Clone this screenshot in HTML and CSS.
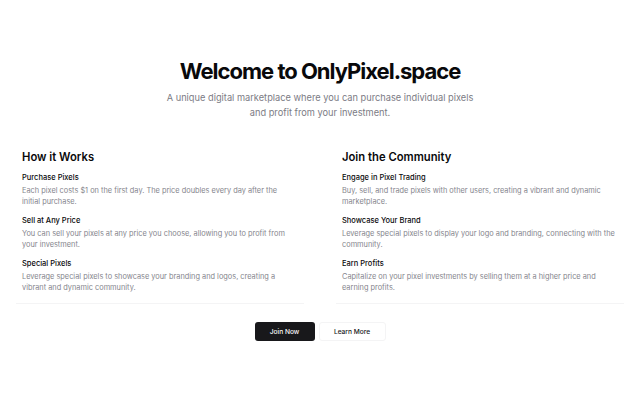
FILE: index.html
```html
<!DOCTYPE html>
<html lang="en">
<head>
<meta charset="utf-8">
<title>OnlyPixel.space</title>
<link rel="stylesheet" href="styles.css">
</head>
<body>
<main class="page">
  <header class="hero">
    <h1>Welcome to OnlyPixel.space</h1>
    <p>A unique digital marketplace where you can purchase individual pixels and profit from your investment.</p>
  </header>
  <div class="columns">
    <section class="card">
      <h2>How it Works</h2>
      <div class="items">
        <div><h3>Purchase Pixels</h3><p>Each pixel costs $1 on the first day. The price doubles every day after the initial purchase.</p></div>
        <div><h3>Sell at Any Price</h3><p>You can sell your pixels at any price you choose, allowing you to profit from your investment.</p></div>
        <div><h3>Special Pixels</h3><p>Leverage special pixels to showcase your branding and logos, creating a vibrant and dynamic community.</p></div>
      </div>
    </section>
    <section class="card">
      <h2>Join the Community</h2>
      <div class="items">
        <div><h3>Engage in Pixel Trading</h3><p>Buy, sell, and trade pixels with other users, creating a vibrant and dynamic marketplace.</p></div>
        <div><h3>Showcase Your Brand</h3><p>Leverage special pixels to display your logo and branding, connecting with the community.</p></div>
        <div><h3>Earn Profits</h3><p>Capitalize on your pixel investments by selling them at a higher price and earning profits.</p></div>
      </div>
    </section>
  </div>
  <div class="actions">
    <a class="btn primary" href="#">Join Now</a>
    <a class="btn secondary" href="#">Learn More</a>
  </div>
</main>
</body>
</html>
```
FILE: styles.css
```css
* { box-sizing: border-box; }
html, body { margin: 0; padding: 0; background: #fff; }
body { font-family: Inter, "Liberation Sans", sans-serif; color: #09090b; height: 401px; overflow: hidden; }
.page { padding-top: 56px; }
.hero { text-align: center; }
.hero h1 { margin: 0; font-size: 22px; line-height: 30px; font-weight: 700; letter-spacing: -1px; }
.hero p { margin: 3.5px auto 0; width: 320px; font-size: 9.25px; line-height: 15px; color: #7b7b84; }
.columns { display: grid; grid-template-columns: 1fr 1fr; gap: 32px; margin: 21.5px 16px 0; }
.card { padding: 8px 7px 10.5px 6px; border-bottom: 1px solid #f4f4f5; }
.card h2 { margin: 0; font-size: 11.25px; line-height: 16px; font-weight: 600; }
.items { display: flex; flex-direction: column; gap: 8px; margin-top: 6.5px; }
.items h3 { margin: 0 0 2px; font-size: 7.5px; line-height: 11px; font-weight: 500; }
.items p { margin: 0; font-size: 7.38px; line-height: 11px; color: #85858d; }
.actions { display: flex; justify-content: center; gap: 4px; margin-top: 18px; }
.btn { display: flex; align-items: center; justify-content: center; height: 19px; border-radius: 3px; font-size: 6.6px; font-weight: 500; text-decoration: none; }
.primary { width: 60px; background: #18181b; color: #fafafa; }
.secondary { width: 67px; background: #fff; color: #18181b; border: 1px solid #f4f4f5; }
```
